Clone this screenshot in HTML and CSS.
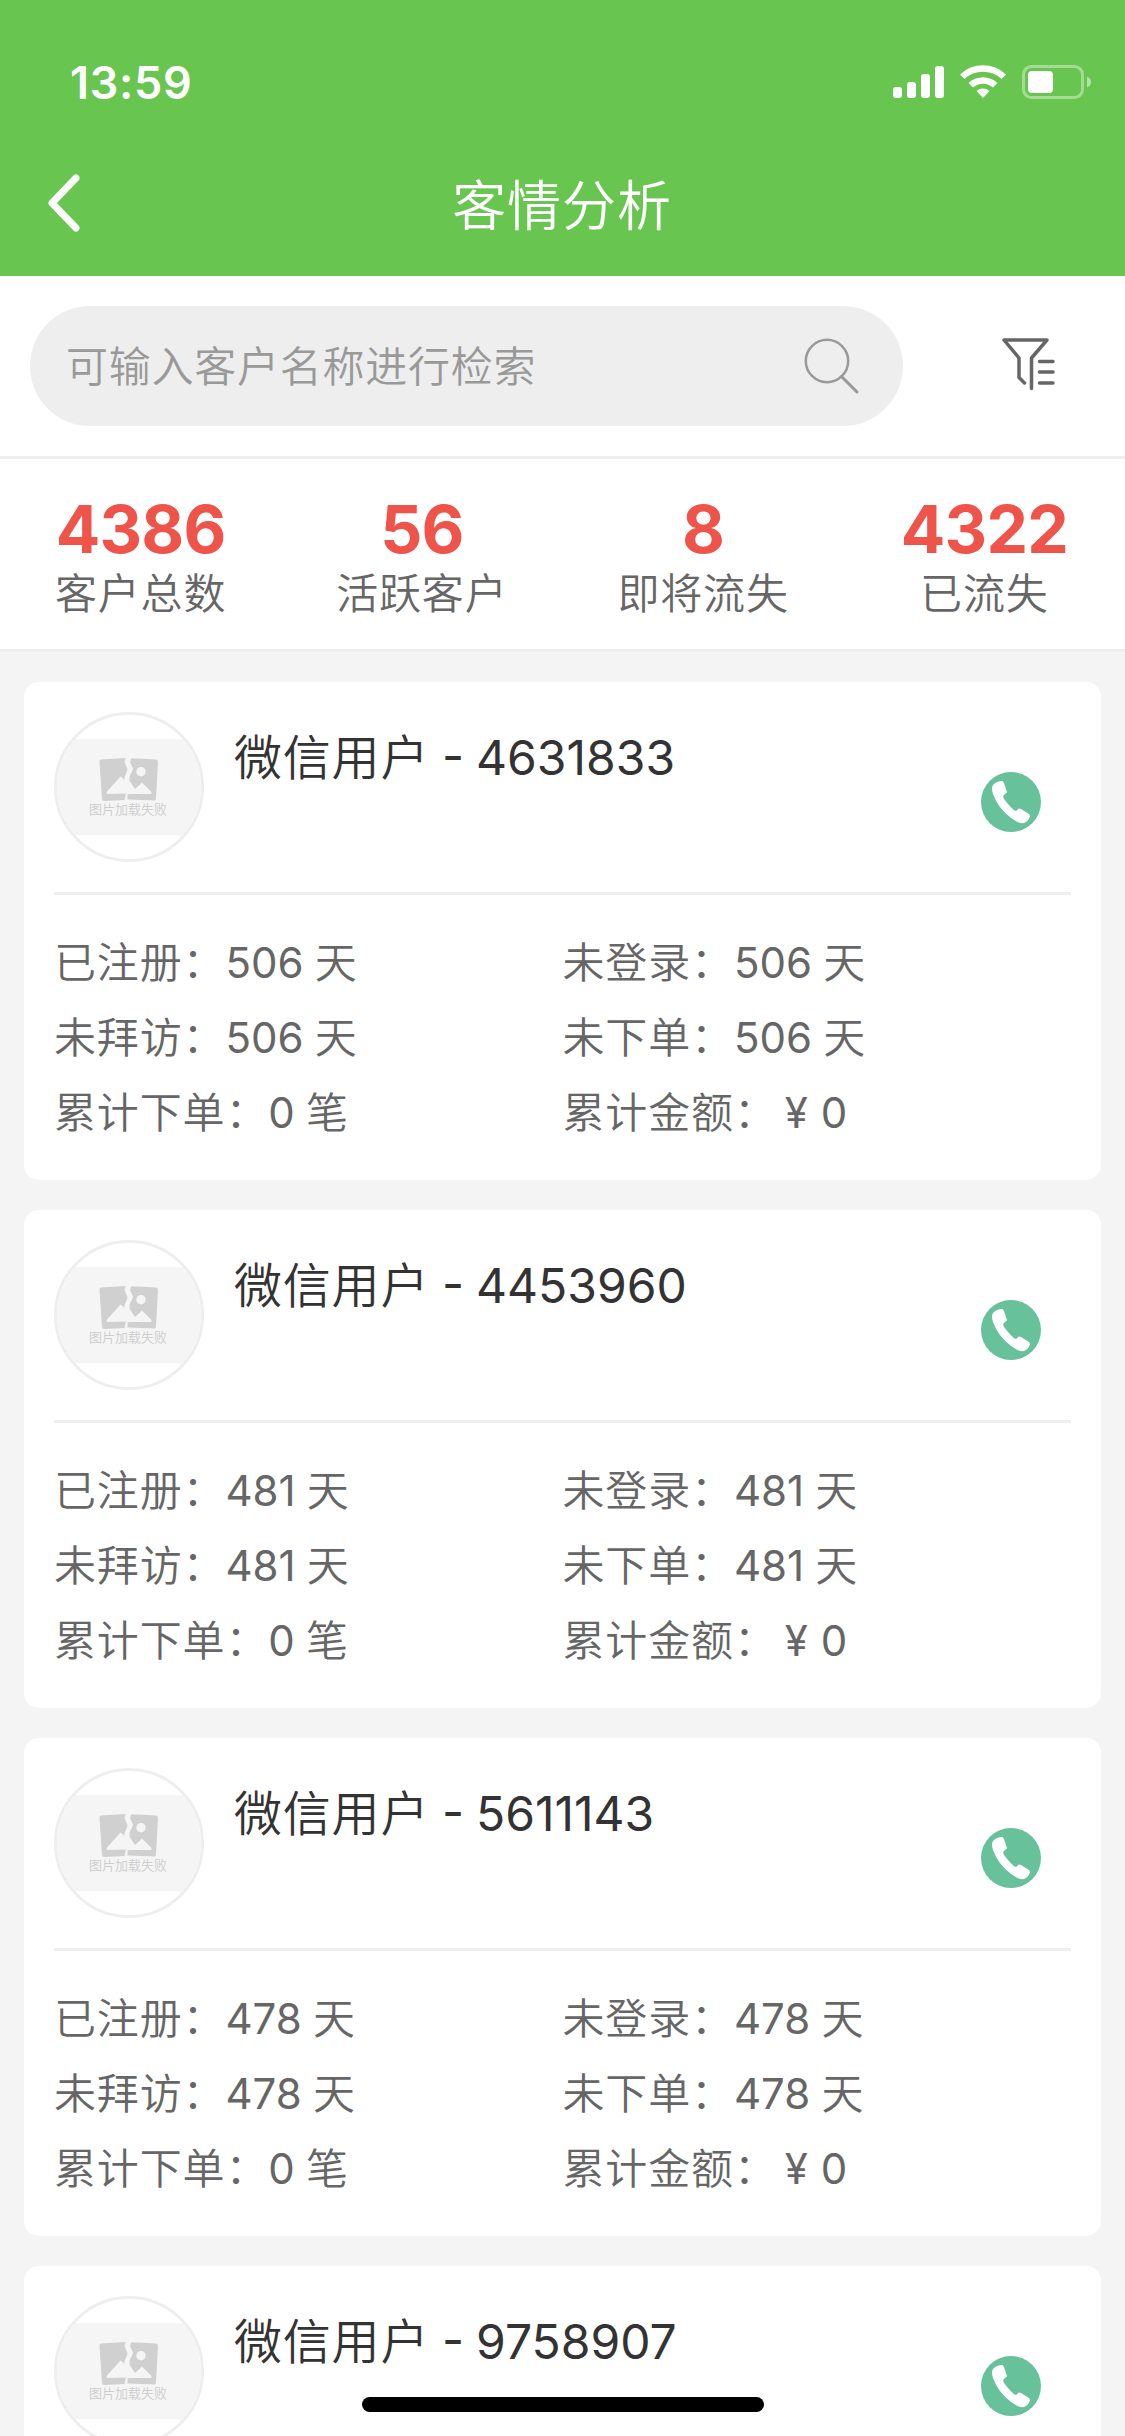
FILE: index.html
```html
<!DOCTYPE html>
<html lang="zh-CN">
<head>
  <meta charset="UTF-8">
  <title>客情分析</title>
  <link rel="stylesheet" href="styles.css">
</head>
<body>

  <!-- 图标 -->
  <svg class="sprite">
    <symbol id="icon-broken" viewBox="0 0 59 43">
      <path fill="#d0d0d0" d="M2 1.500 L27 0 L25.500 3.500 L28.500 11.500 L25.500 19.500 L26 22 L21.500 18.500 L8 33.500 Q7 36 9 36 L27 35.500 L25.500 42 L5 43 Q3 43 3 41 L.5 4 Q.3 1.800 2 1.500 Z"/>
      <path fill="#d0d0d0" d="M32.500 .3 L57 1.500 Q59 1.500 59 4 L57 40.500 Q57 42.500 55 42.500 L28.500 41.500 V36 H51 Q53 36 52.500 34 L43 24.500 L36 31 L30.500 23 V19 L34 11 L31 4 Z"/>
      <circle fill="#f5f5f5" cx="42" cy="13.700" r="4.700"/>
    </symbol>
    <symbol id="icon-phone" viewBox="0 0 60 60">
      <circle fill="#67c29c" cx="30" cy="30" r="30"/>
      <path fill="#fff" d="M12 13 Q16 9 21 9 Q22 9 23 11 L26 20 Q26 21 24 22 Q21 24 23 27 Q28 34 34 39 Q36 39 37 37 Q38 36 40 37 L48 42 Q49 43 49 44 Q48 49 43 51 Q38 52 30 46 Q17 36 12 22 Q10 16 12 13 Z"/>
    </symbol>
  </svg>

  <header>
    <div class="status-bar">
      <span class="time">13:59</span>
      <svg class="status-icons" width="200" height="36" viewBox="0 0 200 36">
        <g fill="#fff">
          <rect x="2" y="23" width="9" height="11" rx="3"/>
          <rect x="16" y="18" width="9" height="16" rx="3"/>
          <rect x="30" y="10" width="9" height="24" rx="3"/>
          <rect x="44" y="2" width="9" height="32" rx="3"/>
          <path d="M69 10.500 A33 33 0 0 1 115 10.500 L110.500 15 A27 27 0 0 0 73.500 15 Z"/>
          <path d="M77.500 19 A21 21 0 0 1 106.500 19 L102 23.500 A15 15 0 0 0 82 23.500 Z"/>
          <path d="M85.500 27 A10 10 0 0 1 98.500 27 L92 34 Z"/>
          <rect x="137" y="7" width="25" height="22" rx="4"/>
        </g>
        <rect x="132.500" y="2.500" width="59" height="31" rx="8" fill="none" stroke="#fff" stroke-opacity=".4" stroke-width="3"/>
        <path d="M196 12.500 Q200 14 200 18 Q200 22 196 23.500 Z" fill="#fff" fill-opacity=".5"/>
      </svg>
    </div>
    <div class="nav">
      <svg class="back" width="36" height="60" viewBox="0 0 36 60"><path d="M31 5 L7 30 L31 55"/></svg>
      <h1>客情分析</h1>
    </div>
  </header>

  <div class="search-bar">
    <div class="search-box">
      <span>可输入客户名称进行检索</span>
      <svg width="60" height="60" viewBox="0 0 60 60">
        <circle cx="27" cy="25" r="21.200"/>
        <path d="M41.500 40.500 L57 56" stroke-width="3"/>
      </svg>
    </div>
    <svg class="filter" width="54" height="54" viewBox="0 0 54 54">
      <path d="M23.500 46 L18 40.500 V21 L3 3 H46 L30.500 21 V51.500 M38.500 24.500 H52 M38.500 35 H52 M38.500 46 H52"/>
    </svg>
  </div>

  <div class="stats">
    <div class="stat"><b>4386</b><span>客户总数</span></div>
    <div class="stat"><b>56</b><span>活跃客户</span></div>
    <div class="stat"><b>8</b><span>即将流失</span></div>
    <div class="stat"><b>4322</b><span>已流失</span></div>
  </div>

  <!-- 客户列表 -->
  <main class="list">
    <div class="card">
      <div class="card-head">
        <div class="avatar"><div class="avatar-img"><svg><use href="#icon-broken"/></svg><span>图片加载失败</span></div></div>
        <div class="name">微信用户 <i>- 4631833</i></div>
        <svg class="phone"><use href="#icon-phone"/></svg>
      </div>
      <div class="info">
        <div>已注册：<i>506</i> 天</div><div>未登录：<i>506</i> 天</div>
        <div>未拜访：<i>506</i> 天</div><div>未下单：<i>506</i> 天</div>
        <div>累计下单：<i>0</i> 笔</div><div>累计金额：<i class="yen">¥ 0</i></div>
      </div>
    </div>
    <div class="card">
      <div class="card-head">
        <div class="avatar"><div class="avatar-img"><svg><use href="#icon-broken"/></svg><span>图片加载失败</span></div></div>
        <div class="name">微信用户 <i>- 4453960</i></div>
        <svg class="phone"><use href="#icon-phone"/></svg>
      </div>
      <div class="info">
        <div>已注册：<i>481</i> 天</div><div>未登录：<i>481</i> 天</div>
        <div>未拜访：<i>481</i> 天</div><div>未下单：<i>481</i> 天</div>
        <div>累计下单：<i>0</i> 笔</div><div>累计金额：<i class="yen">¥ 0</i></div>
      </div>
    </div>
    <div class="card">
      <div class="card-head">
        <div class="avatar"><div class="avatar-img"><svg><use href="#icon-broken"/></svg><span>图片加载失败</span></div></div>
        <div class="name">微信用户 <i>- 5611143</i></div>
        <svg class="phone"><use href="#icon-phone"/></svg>
      </div>
      <div class="info">
        <div>已注册：<i>478</i> 天</div><div>未登录：<i>478</i> 天</div>
        <div>未拜访：<i>478</i> 天</div><div>未下单：<i>478</i> 天</div>
        <div>累计下单：<i>0</i> 笔</div><div>累计金额：<i class="yen">¥ 0</i></div>
      </div>
    </div>
    <div class="card">
      <div class="card-head">
        <div class="avatar"><div class="avatar-img"><svg><use href="#icon-broken"/></svg><span>图片加载失败</span></div></div>
        <div class="name">微信用户 <i>- 9758907</i></div>
        <svg class="phone"><use href="#icon-phone"/></svg>
      </div>
    </div>
  </main>

  <div class="home-indicator"></div>

</body>
</html>
```
FILE: styles.css
```css
* {
  box-sizing: border-box;
}

body {
  margin: 0;
  height: 2436px;
  overflow: hidden;
  position: relative;
  background: #f4f4f4;
  color: #666;
  font-family: Inter, "Noto Sans CJK SC", sans-serif;
  font-size: 42px;
  font-weight: 350;
}

svg {
  display: block;
  flex-shrink: 0;
}

/* 数字 */
i {
  font-style: normal;
  font-weight: 400;
  letter-spacing: 0;
}

.sprite {
  display: none;
}

header {
  height: 276px;
  background: #68c550;
  color: #fff;
}

.status-bar {
  height: 132px;
  padding: 32px 34px 0 70px;
  display: flex;
  align-items: center;
  justify-content: space-between;
}

.time {
  font-size: 45px;
  font-weight: 600;
  letter-spacing: .7px;
}

.nav {
  height: 144px;
  padding: 0 45px 2px;
  display: flex;
  align-items: center;
}

.back path {
  fill: none;
  stroke: #fff;
  stroke-width: 7;
  stroke-linecap: round;
  stroke-linejoin: round;
}

h1 {
  flex: 1;
  margin: 0 37px 2px 0;
  text-align: center;
  font-size: 54px;
  font-weight: 350;
  letter-spacing: .9px;
}

.search-bar {
  height: 183px;
  padding: 30px 70px 0 30px;
  display: flex;
  justify-content: space-between;
  background: #fff;
  border-bottom: 3px solid #eee;
}

.search-box {
  width: 873px;
  height: 120px;
  padding: 0 43px 0 36px;
  border-radius: 60px;
  background: #eee;
  color: #999;
  letter-spacing: .75px;
  display: flex;
  align-items: center;
  justify-content: space-between;
}

.search-box span {
  padding-bottom: 5px;
}

.search-box svg {
  fill: none;
  stroke: #999;
  stroke-width: 2.500px;
  stroke-linecap: round;
}

.filter {
  margin-top: 31px;
  fill: none;
  stroke: #666;
  stroke-width: 3.500;
  stroke-linecap: round;
  stroke-linejoin: round;
}

.stats {
  height: 193px;
  padding-top: 37px;
  display: flex;
  background: #fff;
  border-bottom: 3px solid #eee;
}

.stat {
  flex: 1;
  display: flex;
  flex-direction: column;
  align-items: center;
  letter-spacing: .87px;
}

.stat b {
  height: 68px;
  line-height: 66px;
  font-size: 66px;
  font-weight: 700;
  letter-spacing: -.8px;
  color: #ee544a;
}

.stat span {
  line-height: 60px;
}

.list {
  height: 1784px;
  overflow: hidden;
  padding: 30px 24px 0;
  display: flex;
  flex-direction: column;
  gap: 30px;
}

.card {
  height: 498px;
  flex-shrink: 0;
  padding: 30px 30px 0;
  border-radius: 15px;
  background: #fff;
}

.card-head {
  height: 183px;
  display: flex;
  border-bottom: 3px solid #eee;
}

.avatar {
  width: 150px;
  height: 150px;
  border: 3px solid #eee;
  border-radius: 50%;
  overflow: hidden;
  display: flex;
  align-items: center;
}

.avatar-img {
  width: 144px;
  height: 96px;
  padding: 19px 2px 0 0;
  background: #f5f5f5;
  display: flex;
  flex-direction: column;
  align-items: center;
}

.avatar-img svg {
  width: 59px;
  height: 43px;
}

.avatar-img span {
  margin-top: 1px;
  font-size: 13px;
  line-height: 15px;
  color: #ccc;
}

.name {
  flex: 1;
  padding-left: 30px;
  line-height: 91px;
  font-size: 48px;
  letter-spacing: .8px;
  word-spacing: -1.500px;
  color: #333;
}

.phone {
  width: 60px;
  height: 60px;
  margin: 60px 30px 0 0;
}

.info {
  padding-top: 30px;
  display: grid;
  grid-template-columns: 1fr 1fr;
  line-height: 75px;
  letter-spacing: .87px;
  word-spacing: -1.500px;
}

.yen {
  margin-left: 8px;
  word-spacing: 1px;
}

.home-indicator {
  position: absolute;
  left: 362px;
  bottom: 24px;
  width: 402px;
  height: 15px;
  border-radius: 8px;
  background: #000;
}
```
